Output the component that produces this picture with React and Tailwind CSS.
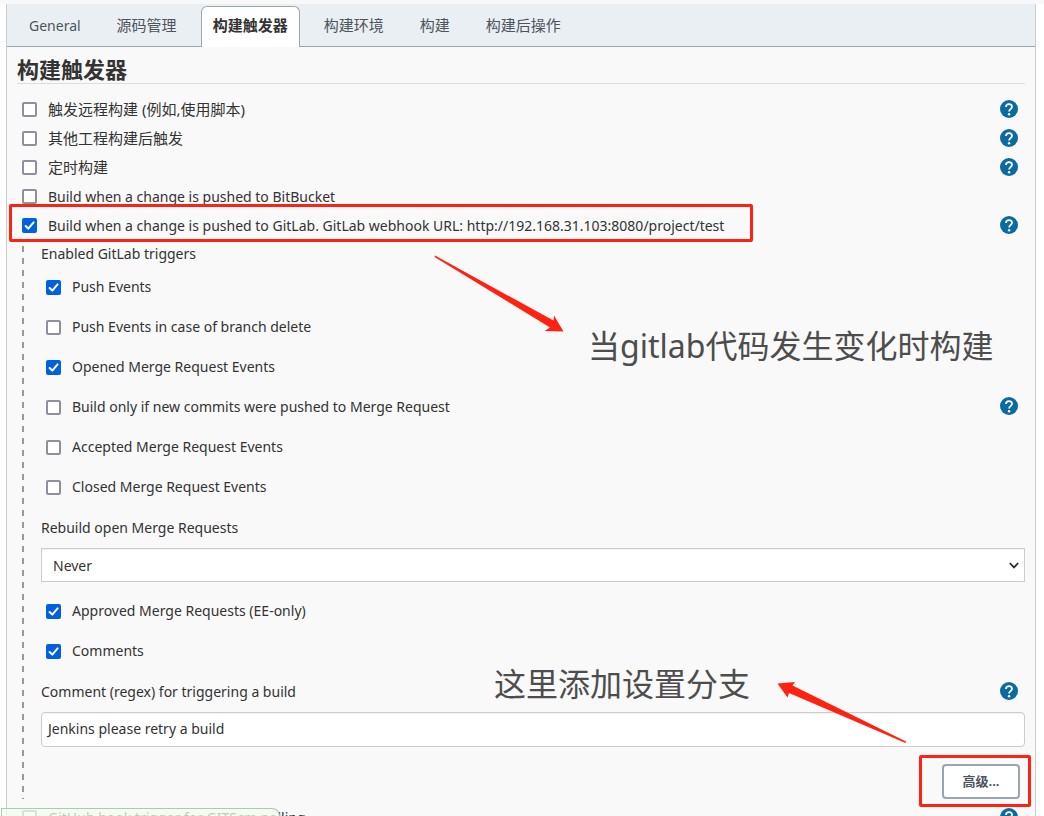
import { useState } from "react";
import clsx from "clsx";

const TABS = ["General", "源码管理", "构建触发器", "构建环境", "构建", "构建后操作"];

// Chinese labels are set one pixel larger than Latin ones
const textSize = (label) => (/[\u4e00-\u9fff]/.test(label) ? "text-[15px]" : "text-sm");

const HelpButton = ({ label }) => (
  <button type="button" aria-label={`Help: ${label}`} className="mr-[7px] shrink-0 cursor-pointer pb-0.5">
    <svg viewBox="0 0 24 24" className="size-[18px]">
      <circle cx="12" cy="12" r="12" fill="#0b6aa2" />
      <path
        d="M8 9.4C8 7 9.6 5.4 12 5.4s4 1.5 4 3.7c0 2.9-3.9 3.2-3.9 6.2"
        fill="none"
        stroke="#fff"
        strokeWidth="2.4"
      />
      <circle cx="12.1" cy="19" r="1.6" fill="#fff" />
    </svg>
  </button>
);

const CheckRow = ({ label, checked = false, help = false, nested = false }) => {
  const [on, setOn] = useState(checked);

  return (
    <div className={clsx("flex items-center justify-between pl-[5px]", nested ? "h-10" : "h-[29px]")}>
      <label className={clsx("flex items-center gap-[11px]", textSize(label))}>
        <span className="grid size-[15px] shrink-0 *:col-start-1 *:row-start-1">
          <input
            type="checkbox"
            checked={on}
            onChange={(e) => setOn(e.target.checked)}
            className="size-[15px] appearance-none rounded-xs border-2 border-[#8f8f9d] bg-white checked:border-[#0060df] checked:bg-[#0060df]"
          />
          {on && (
            <svg viewBox="0 0 15 15" className="pointer-events-none size-[15px]">
              <path
                d="M3.6 8 6.3 10.6 11.6 4.4"
                fill="none"
                stroke="#fff"
                strokeWidth="2"
                strokeLinecap="round"
                strokeLinejoin="round"
              />
            </svg>
          )}
        </span>
        {label}
      </label>
      {help && <HelpButton label={label} />}
    </div>
  );
};

const TabBar = () => {
  const [active, setActive] = useState("构建触发器");

  return (
    <div role="tablist" className="flex items-end gap-3 border-b border-[#9ba7af] bg-[#e9eff2] px-[10px] pt-0.5">
      {TABS.map((tab) => (
        <button
          key={tab}
          type="button"
          role="tab"
          aria-selected={tab === active}
          onClick={() => setActive(tab)}
          className={clsx(
            "-mb-px h-[41px] rounded-t-md border border-b-0 px-[11px] pb-0.5 whitespace-nowrap",
            textSize(tab),
            tab === active
              ? "border-[#9ba7af] bg-white font-bold text-[#333]"
              : "border-transparent text-[#4d545d]"
          )}
        >
          {tab}
        </button>
      ))}
    </div>
  );
};

const GitLabSettings = () => (
  <div className="flex gap-[17px] pl-[5px]">
    <div className="w-0.5 shrink-0 bg-[repeating-linear-gradient(transparent_0_6px,#999_6px_12px)]" />
    <div className="min-w-0 flex-1">
      <div className="flex h-[27px] items-center">Enabled GitLab triggers</div>
      <CheckRow nested checked label="Push Events" />
      <CheckRow nested label="Push Events in case of branch delete" />
      <CheckRow nested checked label="Opened Merge Request Events" />
      <CheckRow nested help label="Build only if new commits were pushed to Merge Request" />
      <CheckRow nested label="Accepted Merge Request Events" />
      <CheckRow nested label="Closed Merge Request Events" />

      <label htmlFor="rebuild" className="flex h-[41px] items-center">
        Rebuild open Merge Requests
      </label>
      <div className="grid *:col-start-1 *:row-start-1">
        <select
          id="rebuild"
          defaultValue="never"
          className="h-[34px] w-full appearance-none border border-[#ccc] bg-white px-[11px] pt-0.5 shadow-[inset_0_1px_1px_#0000000d]"
        >
          <option value="never">Never</option>
          <option value="source">On push to source branch</option>
          <option value="both">On push to source or target branch</option>
        </select>
        <svg viewBox="0 0 10 7" className="pointer-events-none mr-1.5 h-[7px] w-[10px] self-center justify-self-end">
          <path d="M.8 1 5 5.4 9.2 1" fill="none" stroke="#2b2b2b" strokeWidth="1.8" />
        </svg>
      </div>

      <div className="pt-[9px]">
        <CheckRow nested checked label="Approved Merge Requests (EE-only)" />
        <CheckRow nested checked label="Comments" />
      </div>

      <div className="flex h-[41px] items-center justify-between">
        <label htmlFor="comment">Comment (regex) for triggering a build</label>
        <HelpButton label="Comment (regex)" />
      </div>
      <input
        id="comment"
        type="text"
        defaultValue="Jenkins please retry a build"
        className="block h-[35px] w-full rounded-sm border border-[#ccc] bg-white px-0.5 pb-0.5 indent-1 shadow-[inset_0_1px_1px_#0000000d]"
      />

      <div className="flex justify-end pt-[17px] pr-[5px]">
        <div className="relative">
          <button
            type="button"
            className="h-[35px] w-[78px] rounded-sm border-2 border-[#9aa6af] bg-white text-[13px] font-bold text-[#4d545d]"
          >
            高级...
          </button>
          <div className="pointer-events-none absolute -top-[9px] -right-[11px] -bottom-2 -left-[23px] rounded-xs border-3 border-[#ff2213]" />
        </div>
      </div>
    </div>
  </div>
);

// Hand-drawn notes lying over the form
const Annotations = () => (
  <div className="pointer-events-none absolute inset-0 text-[32px] leading-10 whitespace-nowrap text-[#4d4d4d]">
    <svg className="absolute top-0 left-0 h-[816px] w-[1044px]" fill="#ff2213">
      <path d="M435 255.500 553.500 320.500 554 315.500 563.500 331.500 544.500 331 550 327.500 434.500 257Z" />
      <path d="M777.500 683.500 795 682 792.500 685.500 906 741.500 905.500 743 789 693 787.500 697.500Z" />
    </svg>
    <p className="absolute top-[326px] left-[588px]">当gitlab代码发生变化时构建</p>
    <p className="absolute top-[664px] left-[494px]">这里添加设置分支</p>
  </div>
);

const App = () => (
  <div className="relative h-screen overflow-hidden bg-white pt-1 font-['Noto_Sans','Noto_Sans_CJK_SC',sans-serif] text-sm text-[#333]">
    <div className="absolute inset-x-0 top-0 h-1 bg-[#f8f8f8]" />
    <main className="mr-2 ml-1.5 border-x border-[#ccc] bg-[#f9f9f9]">
      <TabBar />
      <form className="px-[10px]" onSubmit={(e) => e.preventDefault()}>
        <h2 className="mb-[11px] border-b border-[#ddd] pt-2 text-[22px] leading-7 font-bold">构建触发器</h2>
        <CheckRow help label="触发远程构建 (例如,使用脚本)" />
        <CheckRow help label="其他工程构建后触发" />
        <CheckRow help label="定时构建" />
        <CheckRow label="Build when a change is pushed to BitBucket" />
        <div className="relative">
          <CheckRow
            checked
            help
            label="Build when a change is pushed to GitLab. GitLab webhook URL: http://192.168.31.103:8080/project/test"
          />
          <div className="pointer-events-none absolute -top-[7px] -bottom-0.5 -left-2 w-[744px] rounded-xs border-3 border-[#ff2213]" />
        </div>
        <GitLabSettings />
        <div className="pt-1">
          <CheckRow help label="GitHub hook trigger for GITScm polling" />
        </div>
      </form>
    </main>
    <Annotations />
    <div className="absolute bottom-0 left-px h-2 w-[279px] rounded-tr-2xl border border-b-0 border-[#a3cdb8] bg-[#f5f9ee]/75" />
  </div>
);

export default App;
